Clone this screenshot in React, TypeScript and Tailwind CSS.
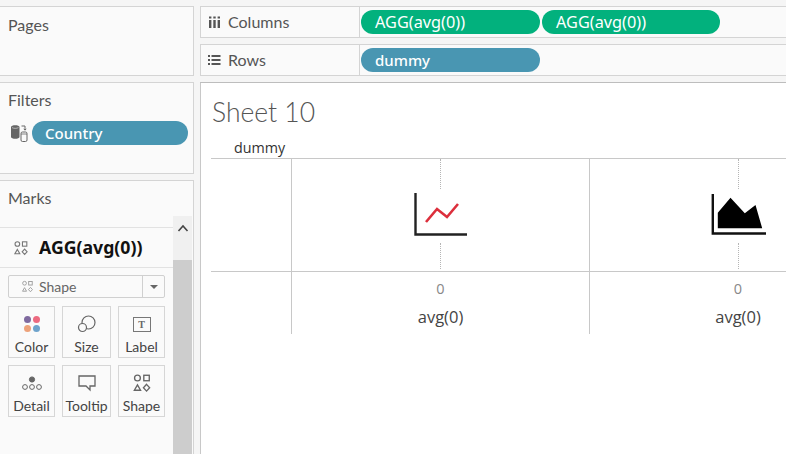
const sans = "font-['Lato','Noto_Sans',sans-serif]"
const noto = "font-['Noto_Sans',sans-serif]"

function ShapesIcon({ size = 22, color = '#666' }: { size?: number; color?: string }) {
  return (
    <svg width={size} height={size} viewBox="0 0 22 22" fill="none" stroke={color} strokeWidth="1.5">
      <circle cx="6" cy="5.5" r="3.2" />
      <rect x="13" y="2.5" width="6" height="6" />
      <path d="M6 13l3.4 6H2.6z" />
      <path d="M16 12.5l3.4 3.7-3.4 3.7-3.4-3.7z" />
    </svg>
  )
}

function Pill({ label, className }: { label: string; className: string }) {
  return <div className={`h-6 rounded-full pl-[14px] leading-6 text-white ${noto} ${className}`}>{label}</div>
}

function MarkButton({ label, children }: { label: string; children: React.ReactNode }) {
  return (
    <div className="flex h-[52px] flex-col items-center border border-[#d6d6d6] text-[14px] text-[#444]">
      <div className="flex h-[31px] items-center pt-1">{children}</div>
      <span className="leading-5">{label}</span>
    </div>
  )
}

function Sidebar() {
  return (
    <div className="flex w-[194px] shrink-0 flex-col gap-[6px] pt-[6px]">
      <div className="h-[70px] shrink-0 border border-l-0 border-[#d4d4d4] bg-[#fafafa] pl-2 pt-[7px] text-[16px] leading-[22px] text-[#555]">
        Pages
      </div>
      <div className="h-[92px] shrink-0 border border-l-0 border-[#d4d4d4] bg-[#fafafa] pl-2 pt-[6px] text-[16px] text-[#555]">
        <div className="leading-[22px]">Filters</div>
        <div className="mt-[10px] flex items-center gap-[4px] pl-[2px] pr-[5px]">
          <svg width="18" height="20" viewBox="0 0 18 20">
            <path d="M1 4C1 1.6 9.5 1.6 9.5 4V14C9.5 16.4 1 16.4 1 14z" fill="#666" />
            <path d="M2 4.6C4 5.6 6.5 5.6 8.5 4.6" fill="none" stroke="#c8c8c8" strokeWidth="0.8" />
            <path d="M11.5 3h3.5v4M13.8 5.8L15 7.2 16.2 5.8" fill="none" stroke="#666" strokeWidth="1" />
            <rect x="11" y="9" width="6" height="9.5" rx="1.5" fill="#fafafa" stroke="#666" />
            <path d="M11 11h6" stroke="#666" strokeWidth="0.8" />
          </svg>
          <div className="h-6 flex-1 rounded-full bg-[#4996b2] pl-[13px] font-['Noto_Sans',sans-serif] text-[15px] font-medium leading-6 text-white">
            Country
          </div>
        </div>
      </div>
      <div className="flex h-[280px] shrink-0 border border-l-0 border-[#d4d4d4] bg-[#fafafa]">
        <div className="flex-1">
          <div className="h-[47px] border-b border-[#e2e2e2] pl-2 pt-[6px] text-[16px] leading-[22px] text-[#555]">
            Marks
          </div>
          <div className="flex h-[40px] items-center gap-[10px] border-b border-[#e2e2e2] pl-[13px]">
            <ShapesIcon size={16} color="#777" />
            <span className="font-['Noto_Sans',sans-serif] text-[17.7px] font-bold text-[#111]">AGG(avg(0))</span>
          </div>
          <div className="mx-2 mt-[7px] flex h-[23px] items-center rounded-[2px] border border-[#d0d0d0] text-[14px] text-[#666]">
            <div className="flex flex-1 items-center gap-[5px] pl-[12px]">
              <ShapesIcon size={13} color="#999" />
              Shape
            </div>
            <div className="flex h-full w-[22px] items-center justify-center border-l border-[#d0d0d0]">
              <div className="h-0 w-0 border-x-[4px] border-t-[4px] border-x-transparent border-t-[#666]" />
            </div>
          </div>
          <div className="mx-2 mt-2 grid grid-cols-[47px_49px_47px] gap-[7px]">
            <MarkButton label="Color">
              <div className="grid grid-cols-2 gap-[2px]">
                <div className="size-[7px] rounded-full bg-[#7f6a9f]" />
                <div className="size-[7px] rounded-full bg-[#ec6a80]" />
                <div className="size-[7px] rounded-full bg-[#eda27a]" />
                <div className="size-[7px] rounded-full bg-[#6ea3cc]" />
              </div>
            </MarkButton>
            <MarkButton label="Size">
              <svg width="20" height="18" viewBox="0 0 20 18" fill="#fafafa" stroke="#666" strokeWidth="1.2">
                <circle cx="11.5" cy="7.5" r="6.5" />
                <circle cx="5.5" cy="12.5" r="4" />
              </svg>
            </MarkButton>
            <MarkButton label="Label">
              <div className="flex h-[15px] w-[18px] items-center justify-center border-[1.5px] border-[#777] font-['Liberation_Serif',serif] text-[10px] font-bold text-[#666]">
                T
              </div>
            </MarkButton>
            <MarkButton label="Detail">
              <svg width="20" height="18" viewBox="0 0 20 18" fill="none" stroke="#666" strokeWidth="1">
                <circle cx="10" cy="5.5" r="2.6" fill="#666" />
                <circle cx="3" cy="13" r="2.4" />
                <circle cx="10" cy="13" r="2.4" />
                <circle cx="17" cy="13" r="2.4" />
              </svg>
            </MarkButton>
            <MarkButton label="Tooltip">
              <svg width="20" height="18" viewBox="0 0 20 18" fill="none" stroke="#666" strokeWidth="1.3">
                <path d="M2 2h16v10h-5v4l-4-4H2z" />
              </svg>
            </MarkButton>
            <MarkButton label="Shape">
              <ShapesIcon size={20} />
            </MarkButton>
          </div>
        </div>
        <div className="flex w-5 flex-col pr-[1px] pt-[35px]">
          <div className="flex h-[44px] items-start justify-center bg-[#f0f0f0] pt-[8px]">
            <svg width="12" height="8" viewBox="0 0 12 8" fill="none" stroke="#444" strokeWidth="1.6">
              <path d="M1.5 7L6 2l4.5 5" />
            </svg>
          </div>
          <div className="flex-1 bg-[#cdcdcd]" />
        </div>
      </div>
    </div>
  )
}

function Shelf({ label, icon, children }: { label: string; icon: React.ReactNode; children: React.ReactNode }) {
  return (
    <div className="flex h-8 shrink-0 border-y border-[#d4d4d4] bg-[#fafafa]">
      <div className="flex w-[160px] shrink-0 items-center gap-[7px] border-x border-[#d4d4d4] pl-[7px] text-[16px] text-[#555]">
        {icon}
        {label}
      </div>
      <div className="flex items-center gap-[2px] pl-[1px]">{children}</div>
    </div>
  )
}

function GridCell({ children, last }: { children: React.ReactNode; last?: boolean }) {
  return <div className={`relative flex flex-col items-center ${last ? '' : 'border-r border-[#c8c8c8]'}`}>{children}</div>
}

function Dotted({ className }: { className: string }) {
  return <div className={`border-l border-dotted border-[#b5b5b5] ${className}`} />
}

function LineMark() {
  return (
    <svg width="54" height="46" viewBox="0 0 54 46" fill="none">
      <path d="M1.5 1v41.5H53" stroke="#222" strokeWidth="2.4" />
      <path d="M12 30l11-13 10 8 11-13" stroke="#dc2f3c" strokeWidth="2.6" />
    </svg>
  )
}

function AreaMark() {
  return (
    <svg width="57" height="46" viewBox="0 0 57 46" fill="none">
      <path d="M2.8 2v39.5H56" stroke="#111" strokeWidth="2.4" />
      <path d="M7.8 36.3V20.7L20.5 5.7 34.8 21.3 45.5 13 52.2 36.3z" fill="#000" />
    </svg>
  )
}

function Sheet() {
  return (
    <div className="ml-[-1px] flex-1 border-l-2 border-t border-l-[#c8c8c8] border-t-[#bdbdbd] bg-white pl-[10px]">
      <div className="pl-[1px] pt-[13px] text-[26.5px] font-light leading-[32px] text-[#555]">Sheet 10</div>
      <div className="h-[30px] pl-[23px] pt-[11px] font-['Open_Sans',sans-serif] text-[14.3px] leading-[18px] text-[#333]">
        dummy
      </div>
      <div className="grid grid-cols-[81px_298px_296px] grid-rows-[114px_62px]">
        <div className="border-y border-r border-[#c8c8c8]" />
        <GridCell>
          <div className="flex h-[114px] w-full flex-col items-center border-y border-[#c8c8c8]">
            <Dotted className="h-[30px]" />
            <div className="h-[46px] pt-[3px]"><LineMark /></div>
            <div className="h-[8px]" />
            <Dotted className="h-[26px]" />
          </div>
        </GridCell>
        <GridCell last>
          <div className="flex h-[114px] w-full flex-col items-center border-y border-[#c8c8c8]">
            <Dotted className="h-[30px]" />
            <div className="h-[46px] pt-[3px]"><AreaMark /></div>
            <div className="h-[8px]" />
            <Dotted className="h-[26px]" />
          </div>
        </GridCell>
        <div className="border-r border-[#c8c8c8]" />
        {[0, 1].map((i) => (
          <GridCell key={i} last={i === 1}>
            <div className="pt-[8px] font-['Open_Sans',sans-serif] text-[14.5px] leading-[18px] text-[#888]">0</div>
            <div className="pt-[10px] font-['Open_Sans',sans-serif] text-[16.5px] leading-[18px] text-[#444]">avg(0)</div>
          </GridCell>
        ))}
      </div>
    </div>
  )
}

export default function App() {
  return (
    <div className={`flex h-[454px] w-[786px] gap-[6px] overflow-hidden bg-[#f5f5f5] ${sans}`}>
      <Sidebar />
      <div className="flex min-w-0 flex-1 flex-col gap-[6px] overflow-hidden pt-[6px]">
        <Shelf
          label="Columns"
          icon={
            <svg width="13" height="12" viewBox="0 0 13 12" fill="#555">
              <rect x="1" y="4" width="2.4" height="8" />
              <rect x="5.3" y="4" width="2.4" height="8" />
              <rect x="9.6" y="4" width="2.4" height="8" />
              <rect x="1" y="0.5" width="2.4" height="2" />
              <rect x="5.3" y="0.5" width="2.4" height="2" />
              <rect x="9.6" y="0.5" width="2.4" height="2" />
            </svg>
          }
        >
          <Pill label="AGG(avg(0))" className="w-[179px] bg-[#02b17d] text-[16.3px]" />
          <Pill label="AGG(avg(0))" className="w-[178px] bg-[#02b17d] text-[16.3px]" />
        </Shelf>
        <Shelf
          label="Rows"
          icon={
            <svg width="13" height="12" viewBox="0 0 13 12" fill="#555">
              <rect x="0" y="1" width="2" height="2" />
              <rect x="0" y="5" width="2" height="2" />
              <rect x="0" y="9" width="2" height="2" />
              <rect x="3.5" y="1" width="9" height="2" />
              <rect x="3.5" y="5" width="9" height="2" />
              <rect x="3.5" y="9" width="9" height="2" />
            </svg>
          }
        >
          <Pill label="dummy" className="w-[179px] bg-[#4996b2] text-[15px] font-medium" />
        </Shelf>
        <Sheet />
      </div>
    </div>
  )
}
